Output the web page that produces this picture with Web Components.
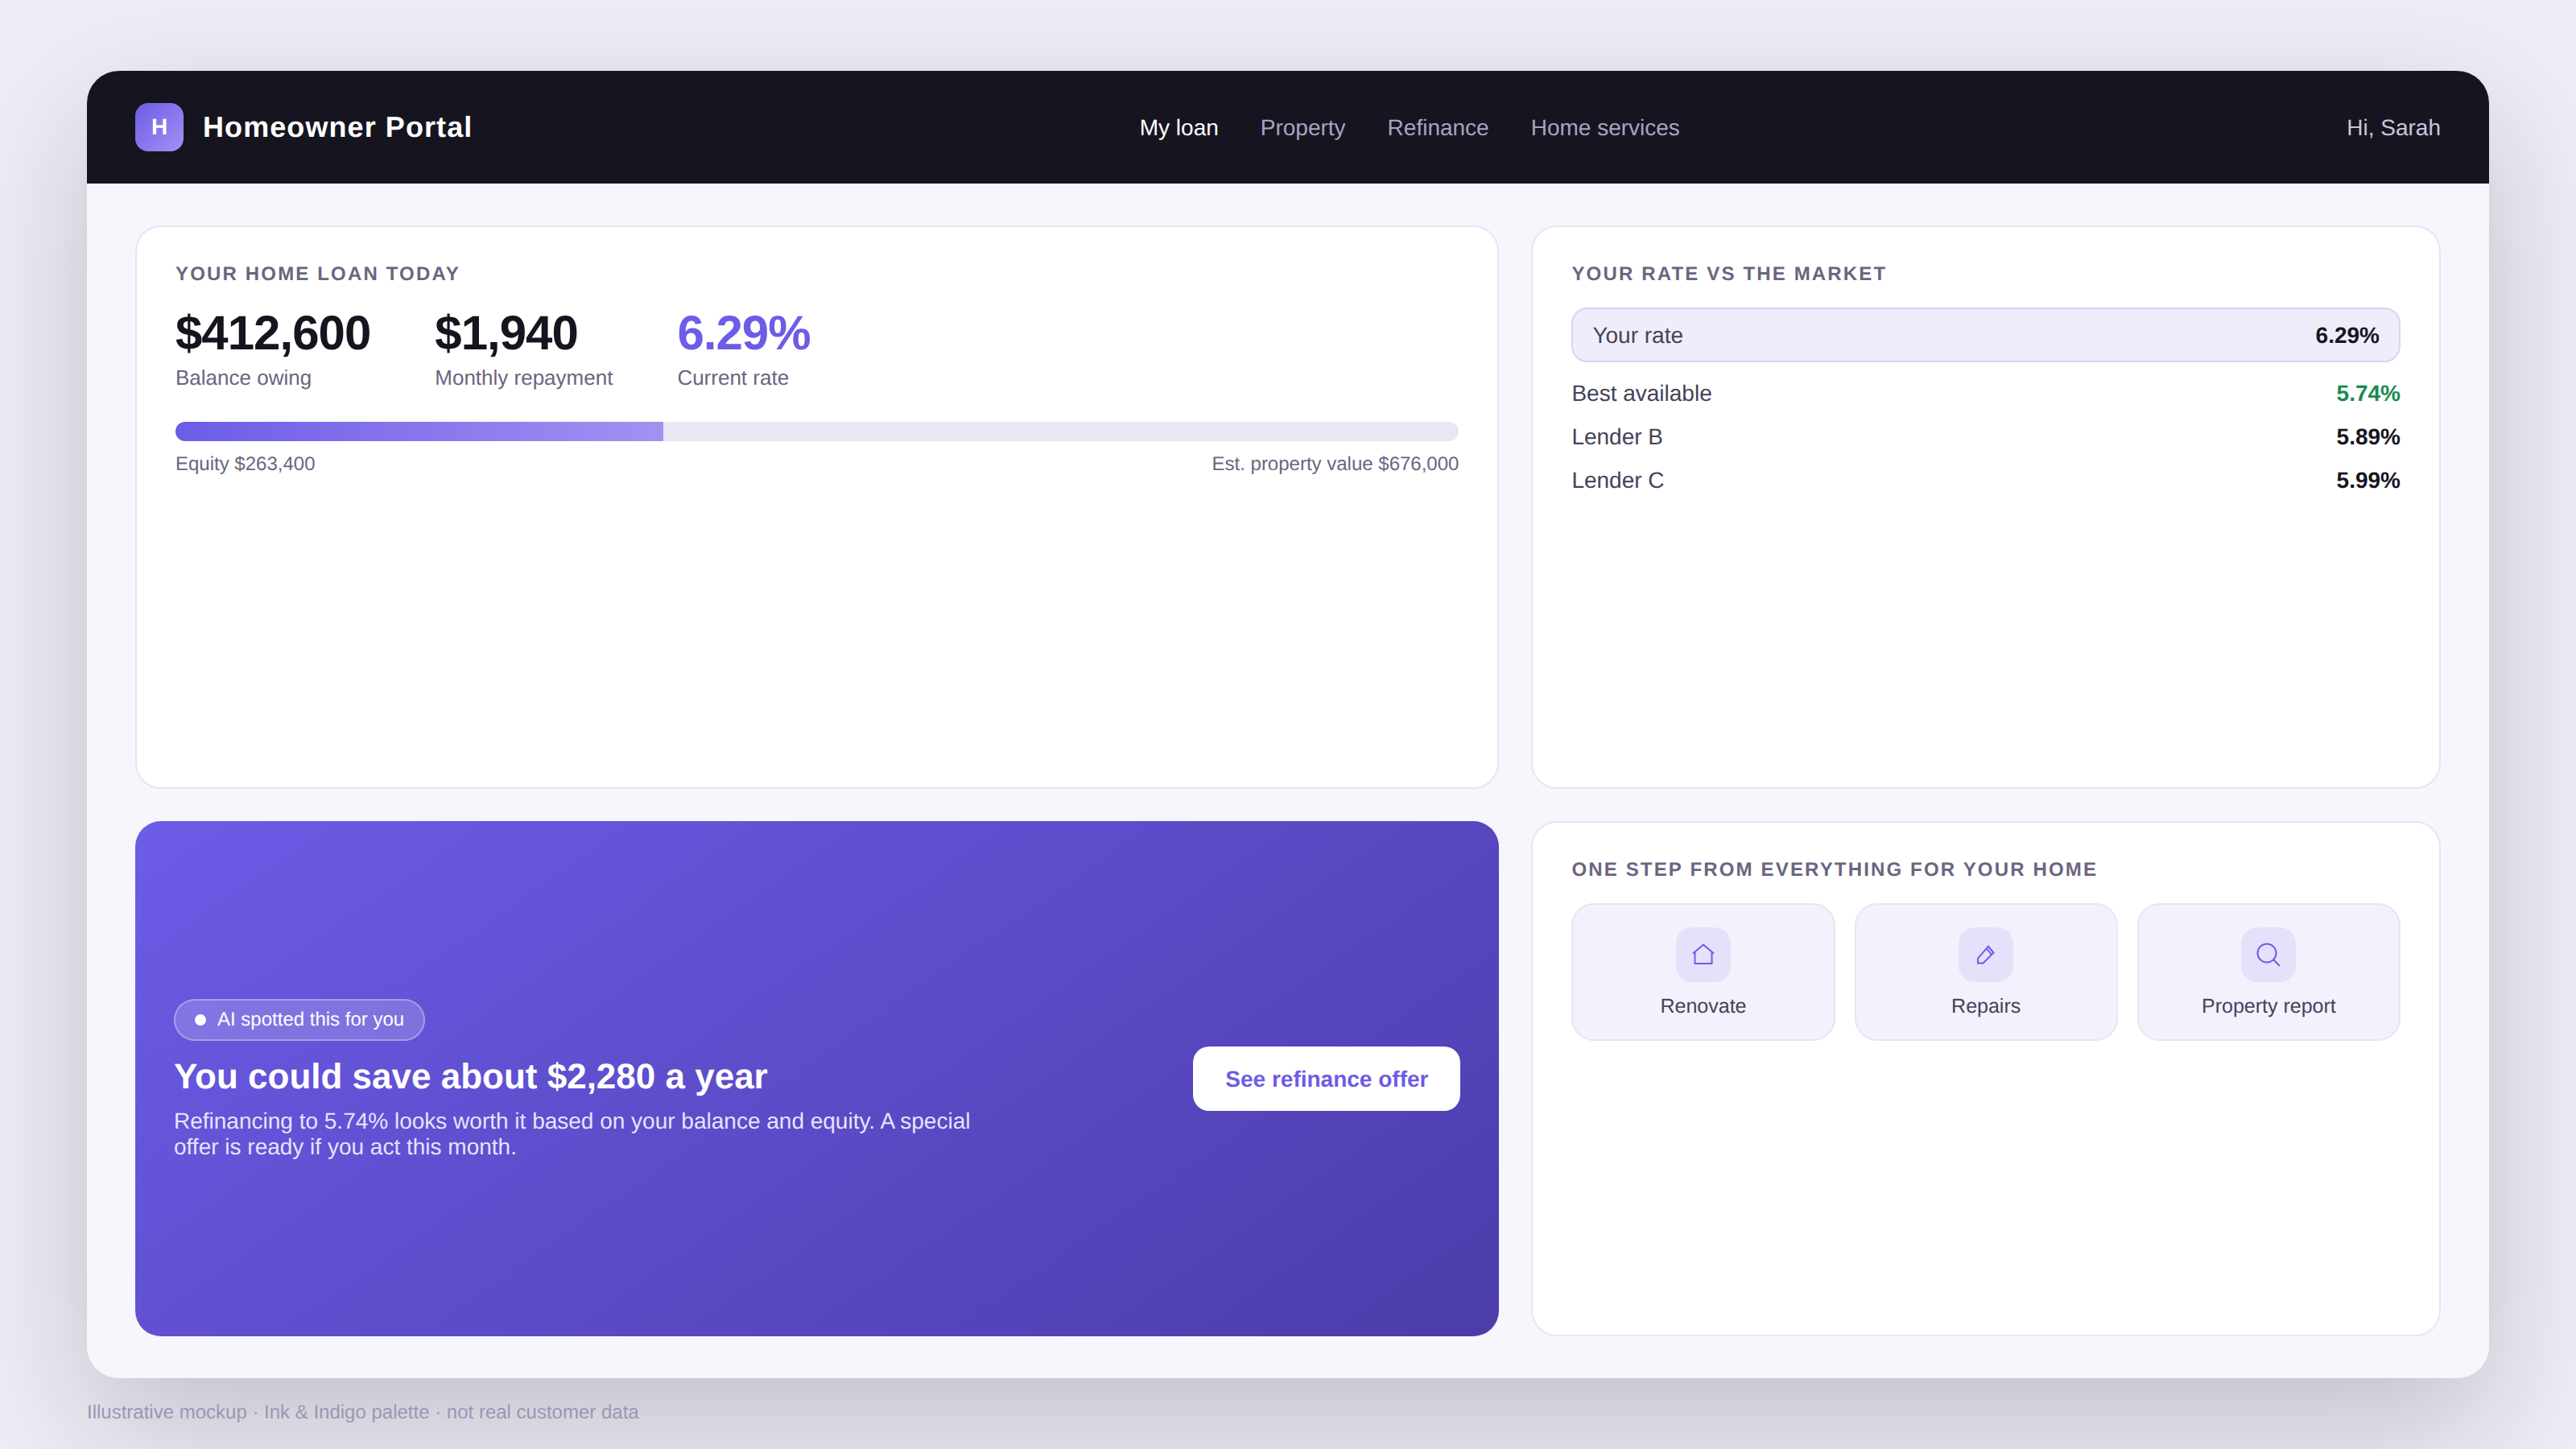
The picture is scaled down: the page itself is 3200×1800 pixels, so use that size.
<!DOCTYPE html>
<html lang="en">
<head>
<meta charset="utf-8">
<title>Homeowner Portal</title>
<style>
    html, body {
        margin: 0;
        height: 100%;
    }
    body {
        background: #eeedf6;
        font-family: "Liberation Sans", Arial, sans-serif;
        text-rendering: geometricPrecision;
    }
</style>
</head>
<body>
<hp-page>
    <hp-header slot="header" user="Hi, Sarah">
        <a class="on">My loan</a>
        <a>Property</a>
        <a>Refinance</a>
        <a>Home services</a>
    </hp-header>
    <hp-card heading="Your home loan today">
        <hp-loan balance="$412,600" repayment="$1,940" rate="6.29%" equity="$263,400" value="$676,000" percent="38"></hp-loan>
    </hp-card>
    <hp-card heading="Your rate vs the market">
        <hp-rate label="Your rate" value="6.29%" current></hp-rate>
        <hp-rate label="Best available" value="5.74%" best></hp-rate>
        <hp-rate label="Lender B" value="5.89%"></hp-rate>
        <hp-rate label="Lender C" value="5.99%"></hp-rate>
    </hp-card>
    <hp-offer></hp-offer>
    <hp-card heading="One step from everything for your home">
        <hp-services>
            <hp-tile label="Renovate" icon="home"></hp-tile>
            <hp-tile label="Repairs" icon="pencil"></hp-tile>
            <hp-tile label="Property report" icon="search"></hp-tile>
        </hp-services>
    </hp-card>
</hp-page>
<script>
class Base extends HTMLElement {
    constructor() {
        super()
        this.attachShadow({mode: 'open'})
    }
    connectedCallback() {
        this.shadowRoot.innerHTML = this.template()
    }
    get(attr) {
        if(this.hasAttribute(attr)) {
            return this.getAttribute(attr)
        } else {
            return ''
        }
    }
}

class PageComponent extends Base {
    template() {
        return `
        <style>
            :host {
                display: block;
                padding: 88px 108px 0;
            }
            #frame {
                height: 1624px;
                display: flex;
                flex-direction: column;
                border-radius: 40px;
                overflow: hidden;
                background: #f7f6fc;
            }
            #shadow {
                border-radius: 40px;
                box-shadow: 0 60px 160px rgba(22, 21, 31, 0.2);
            }
            #grid {
                flex: 1;
                min-height: 0;
                display: grid;
                grid-template-columns: 1.5fr 1fr;
                grid-template-rows: 700px 640px;
                gap: 40px;
                padding: 52px 60px;
            }
            footer {
                margin-top: 29px;
                font-size: 24px;
                line-height: 28px;
                color: #9d95b5;
            }
        </style>
        <div id="shadow">
            <div id="frame">
                <slot name="header"></slot>
                <div id="grid"><slot></slot></div>
            </div>
        </div>
        <footer>Illustrative mockup · Ink &amp; Indigo palette · not real customer data</footer>
        `
    }
}

class HeaderComponent extends Base {
    template() {
        return `
        <style>
            :host {
                display: flex;
                flex: none;
                height: 140px;
                align-items: center;
                justify-content: space-between;
                padding: 0 60px;
                background: #16151f;
                color: #fff;
            }
            #brand {
                display: flex;
                align-items: center;
                gap: 24px;
                font-size: 36px;
                font-weight: 700;
                letter-spacing: 0.03em;
            }
            #logo {
                width: 60px;
                height: 60px;
                border-radius: 16px;
                display: grid;
                place-items: center;
                font-size: 28px;
                letter-spacing: 0;
                background: linear-gradient(135deg, #6c5ce7, #a391f2);
            }
            nav {
                display: flex;
                gap: 52px;
                padding-top: 2px;
                font-size: 28px;
            }
            ::slotted(a) {
                color: #a8a3c2;
            }
            ::slotted(a.on) {
                color: #fff;
            }
            #user {
                padding-top: 2px;
                font-size: 28px;
                color: #c9c5dc;
            }
        </style>
        <div id="brand"><span id="logo">H</span>Homeowner Portal</div>
        <nav><slot></slot></nav>
        <div id="user">${this.get('user')}</div>
        `
    }
}

class CardComponent extends Base {
    template() {
        return `
        <style>
            :host {
                display: block;
                box-sizing: border-box;
                padding: 45px 48px;
                background: #fff;
                border: 2px solid #e7e5f3;
                border-radius: 32px;
            }
            h2 {
                margin: 0 0 27px;
                font-size: 24px;
                line-height: 28px;
                font-weight: 700;
                letter-spacing: 0.09em;
                text-transform: uppercase;
                color: #6b6580;
            }
        </style>
        <h2>${this.get('heading')}</h2>
        <slot></slot>
        `
    }
}

class LoanComponent extends Base {
    template() {
        return `
        <style>
            :host {
                display: block;
            }
            #stats {
                display: flex;
                gap: 80px;
            }
            b {
                display: block;
                font-size: 60px;
                line-height: 64px;
                letter-spacing: -1px;
                color: #16151f;
            }
            b.rate {
                color: #6c5ce7;
            }
            span {
                display: block;
                margin-top: 8px;
                font-size: 26px;
                line-height: 30px;
                color: #6b6580;
            }
            #track {
                height: 24px;
                margin-top: 40px;
                border-radius: 12px;
                overflow: hidden;
                background: #eae7f5;
            }
            #fill {
                height: 100%;
                width: ${this.get('percent')}%;
                background: linear-gradient(90deg, #6c5ce7, #a391f2);
            }
            #ends {
                display: flex;
                justify-content: space-between;
                margin-top: 15px;
                font-size: 24px;
                line-height: 28px;
                color: #6b6580;
            }
        </style>
        <div id="stats">
            <div><b>${this.get('balance')}</b><span>Balance owing</span></div>
            <div><b>${this.get('repayment')}</b><span>Monthly repayment</span></div>
            <div><b class="rate">${this.get('rate')}</b><span>Current rate</span></div>
        </div>
        <div id="track"><div id="fill"></div></div>
        <div id="ends">
            <div>Equity ${this.get('equity')}</div>
            <div>Est. property value ${this.get('value')}</div>
        </div>
        `
    }
}

class RateComponent extends Base {
    template() {
        return `
        <style>
            :host {
                display: flex;
                justify-content: space-between;
                align-items: center;
                height: 54px;
                font-size: 28px;
                color: #454259;
            }
            :host([current]) {
                box-sizing: border-box;
                height: 68px;
                margin-bottom: 12px;
                padding: 2px 24px 0;
                background: #efedfb;
                border: 2px solid #d8d3f7;
                border-radius: 20px;
            }
            b {
                color: #16151f;
            }
            :host([best]) b {
                color: #1a8a50;
            }
        </style>
        <span>${this.get('label')}</span>
        <b>${this.get('value')}</b>
        `
    }
}

class OfferComponent extends Base {
    template() {
        return `
        <style>
            :host {
                display: flex;
                align-items: center;
                justify-content: space-between;
                padding: 0 48px;
                border-radius: 32px;
                color: #fff;
                background: linear-gradient(145deg, #6c5ce7, #4b3caa);
            }
            #text {
                padding-top: 2px;
            }
            #pill {
                display: inline-flex;
                align-items: center;
                gap: 14px;
                box-sizing: border-box;
                height: 52px;
                padding: 0 24px;
                font-size: 24px;
                background: rgba(255, 255, 255, 0.18);
                border: 2px solid rgba(255, 255, 255, 0.3);
                border-radius: 26px;
            }
            #pill i {
                width: 14px;
                height: 14px;
                border-radius: 50%;
                background: #fff;
            }
            h3 {
                margin: 19px 0 13px;
                font-size: 44px;
                line-height: 52px;
                font-weight: 700;
            }
            p {
                margin: 0;
                max-width: 1000px;
                font-size: 28px;
                line-height: 32px;
                color: #e7e3ff;
            }
            button {
                width: 332px;
                height: 80px;
                padding: 2px 0 0;
                border: 0;
                border-radius: 20px;
                background: #fff;
                color: #6c5ce7;
                font: 700 28px "Liberation Sans", Arial, sans-serif;
                text-rendering: geometricPrecision;
            }
        </style>
        <div id="text">
            <div id="pill"><i></i>AI spotted this for you</div>
            <h3>You could save about $2,280 a year</h3>
            <p>Refinancing to 5.74% looks worth it based on your balance and equity. A special offer is ready if you act this month.</p>
        </div>
        <button>See refinance offer</button>
        `
    }
}

class ServicesComponent extends Base {
    template() {
        return `
        <style>
            :host {
                display: grid;
                grid-template-columns: repeat(3, 1fr);
                gap: 24px;
            }
        </style>
        <slot></slot>
        `
    }
}

const ICONS = {
    home: '<path d="M3 14.5 16 3.5l13 11M5.5 12.5V27h21V12.5"/>',
    pencil: '<path d="M6 26.5v-6L19 5.500l6.500 8L12.500 26.500z"/><path d="M16.700 8.100 23.200 16.100"/>',
    search: '<circle cx="14" cy="14" r="11.500"/><path d="M22.500 22.500 30 30"/>'
}

class TileComponent extends Base {
    template() {
        return `
        <style>
            :host {
                display: flex;
                flex-direction: column;
                align-items: center;
                box-sizing: border-box;
                height: 171px;
                padding-top: 28px;
                background: #f3f1fc;
                border: 2px solid #e7e5f3;
                border-radius: 28px;
                font-size: 25px;
                color: #454259;
            }
            #icon {
                width: 68px;
                height: 68px;
                display: grid;
                place-items: center;
                border-radius: 20px;
                background: #e5e1fa;
            }
            svg {
                width: 32px;
                height: 32px;
                fill: none;
                stroke: #6c5ce7;
                stroke-width: 2;
            }
            span {
                margin-top: 15px;
                line-height: 30px;
            }
        </style>
        <div id="icon"><svg viewBox="0 0 32 32">${ICONS[this.get('icon')]}</svg></div>
        <span>${this.get('label')}</span>
        `
    }
}

customElements.define('hp-page', PageComponent)
customElements.define('hp-header', HeaderComponent)
customElements.define('hp-card', CardComponent)
customElements.define('hp-loan', LoanComponent)
customElements.define('hp-rate', RateComponent)
customElements.define('hp-offer', OfferComponent)
customElements.define('hp-services', ServicesComponent)
customElements.define('hp-tile', TileComponent)
</script>
</body>
</html>
